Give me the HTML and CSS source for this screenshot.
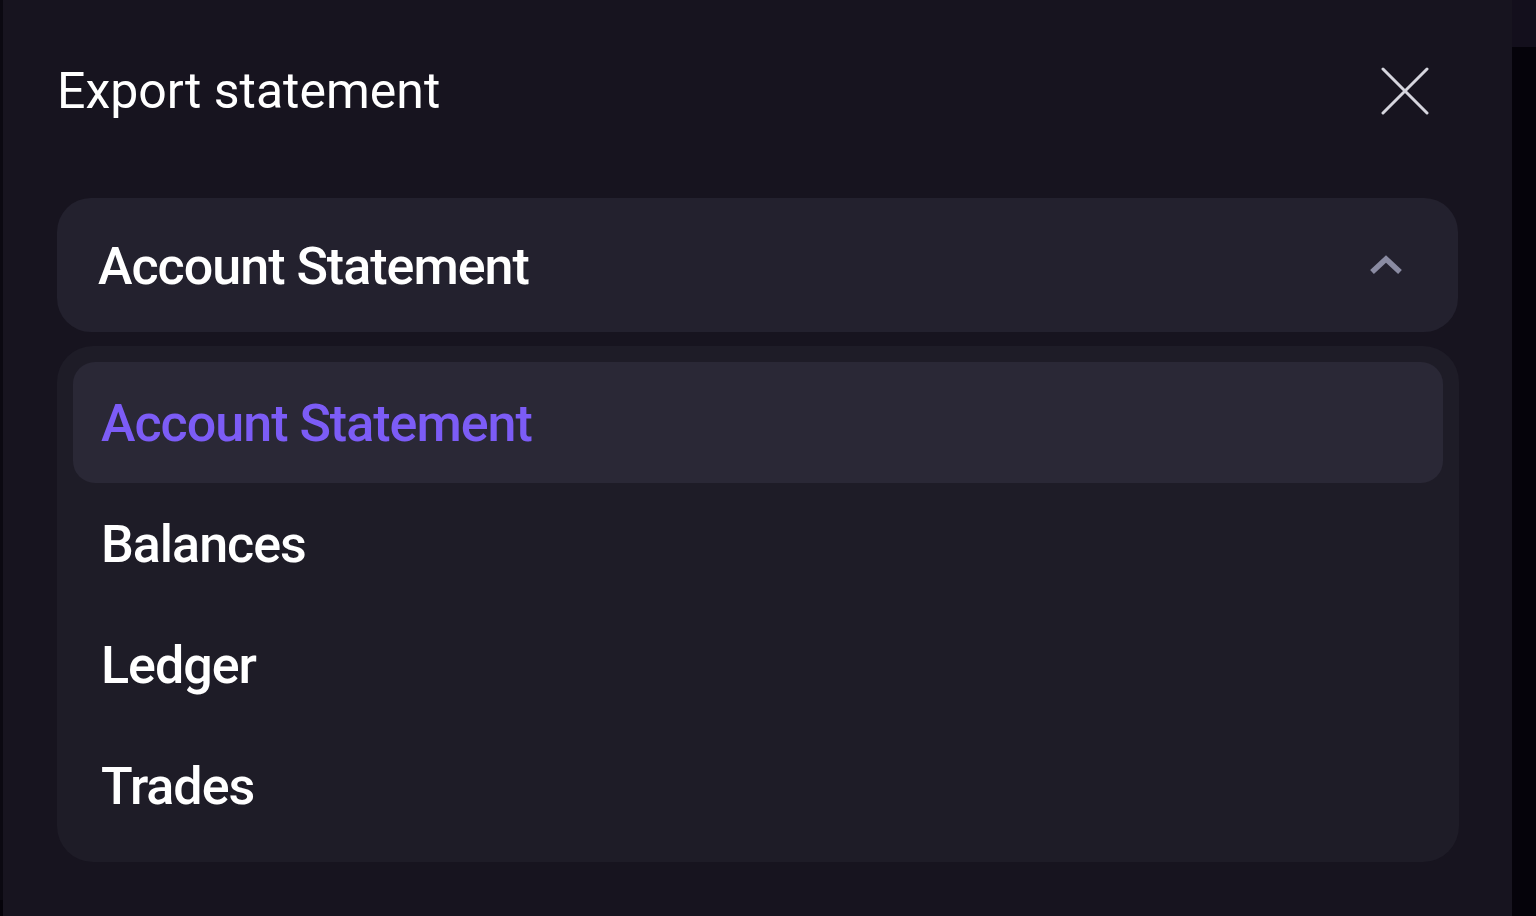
FILE: index.html
```html
<!DOCTYPE html>
<html lang="en">
<head>
<meta charset="utf-8">
<title>Export statement</title>
<link rel="stylesheet" href="styles.css">
</head>
<body>
<div class="page">
  <div class="modal">
    <div class="modal-header">
      <h1 class="modal-title">Export statement</h1>
      <button class="close-btn" aria-label="Close">
        <svg width="48" height="48" viewBox="0 0 48 48" fill="none">
          <path d="M2 2 L46 46 M46 2 L2 46" stroke="#d6d6de" stroke-width="3" stroke-linecap="round"/>
        </svg>
      </button>
    </div>
    <div class="select">
      <span class="select-value">Account Statement</span>
      <svg class="chevron" width="34" height="22" viewBox="0 0 34 22" fill="none">
        <path d="M3 18 L17 5 L31 18" stroke="#8a8ba2" stroke-width="5.5" stroke-linecap="butt" stroke-linejoin="miter"/>
      </svg>
    </div>
    <ul class="options">
      <li class="option option-active">Account Statement</li>
      <li class="option">Balances</li>
      <li class="option">Ledger</li>
      <li class="option">Trades</li>
    </ul>
  </div>
</div>
</body>
</html>
```

FILE: styles.css
```css
* { box-sizing: border-box; }

html, body {
  margin: 0;
  padding: 0;
  height: 100%;
}

body {
  background: linear-gradient(to bottom, #130f1c 0, #130f1c 47px, #05030a 47px, #05030a 100%);
  font-family: Roboto, "Noto Sans", sans-serif;
  color: #ffffff;
  overflow: hidden;
}

.page {
  height: 916px;
  background: linear-gradient(to right, #0b0911 0, #0b0911 3px, transparent 3px);
}

.modal {
  margin-left: 3px;
  margin-top: -16px;
  width: 1509px;
  height: 948px;
  background: #17141f;
  border-radius: 16px;
  padding: 16px 54px 0 54px;
  display: flex;
  flex-direction: column;
}

.modal-header {
  display: flex;
  align-items: flex-start;
  justify-content: space-between;
  height: 198px;
  flex-shrink: 0;
}

.modal-title {
  margin: 0;
  padding-top: 61px;
  font-size: 50px;
  line-height: 60px;
  font-weight: 400;
  letter-spacing: 0;
  color: #ffffff;
}

.close-btn {
  margin-top: 67px;
  margin-right: 29px;
  width: 48px;
  height: 48px;
  padding: 0;
  border: 0;
  background: transparent;
  display: flex;
  align-items: center;
  justify-content: center;
  cursor: pointer;
}

.select {
  height: 134px;
  width: 1401px;
  background: #23212e;
  border-radius: 34px;
  display: flex;
  align-items: center;
  justify-content: space-between;
  padding: 0 55px 0 41px;
  flex-shrink: 0;
}

.select-value {
  font-size: 52px;
  font-weight: 500;
  letter-spacing: -1px;
  line-height: 1;
  padding-top: 3px;
}

.chevron {
  display: block;
}

.options {
  list-style: none;
  margin: 14px 0 0 0;
  width: 1402px;
  padding: 16px;
  background: #1e1c27;
  border-radius: 36px;
  display: flex;
  flex-direction: column;
  flex-shrink: 0;
}

.option {
  height: 121px;
  display: flex;
  align-items: center;
  padding-left: 28px;
  padding-top: 3px;
  font-size: 52px;
  font-weight: 500;
  letter-spacing: -1px;
  line-height: 1;
  color: #ffffff;
  border-radius: 22px;
}

.option-active {
  background: #2a2836;
  color: #7c5cf6;
}
```
